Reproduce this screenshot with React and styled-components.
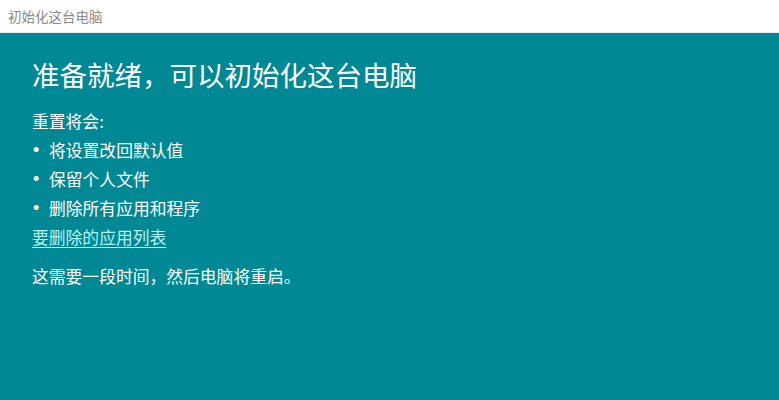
import React from "react";
import styled, { createGlobalStyle } from "styled-components";

const GlobalStyle = createGlobalStyle`
  html, body {
    margin: 0;
    padding: 0;
    height: 100%;
  }
  body {
    font-family: "Noto Sans CJK SC", "Noto Sans", sans-serif;
    background: #008894;
  }
  #root {
    height: 100%;
  }
`;

const Window = styled.div`
  display: flex;
  flex-direction: column;
  height: 100vh;
`;

const TitleBar = styled.div`
  height: 33px;
  background: #ffffff;
  display: flex;
  align-items: center;
  padding: 0 8px;
  font-size: 13.5px;
  color: #8a8a8a;
  border-bottom: 1px solid #e6eeee;
  box-sizing: border-box;
`;

const Content = styled.div`
  flex: 1;
  background: #008894;
  padding: 19px 32px;
  color: #ffffff;
`;

const Heading = styled.h1`
  margin: 0 0 11px;
  font-size: 27.5px;
  font-weight: 400;
  line-height: 44px;
`;

const Text = styled.p`
  margin: 0;
  font-size: 16.8px;
  line-height: 29px;
`;

const List = styled.ul`
  list-style: none;
  margin: 0;
  padding: 0;
`;

const Item = styled.li`
  font-size: 16.8px;
  line-height: 29px;
  display: flex;
  &::before {
    content: "•";
    font-family: "Liberation Sans", Arial, sans-serif;
    font-size: 18px;
    width: 17px;
    padding-left: 1px;
    box-sizing: border-box;
  }
`;

const Link = styled.a`
  display: inline-block;
  font-size: 16.8px;
  line-height: 29px;
  color: #b4f4f4;
  text-decoration: underline;
  text-underline-offset: 3px;
  margin-bottom: 10px;
  cursor: pointer;
`;

export default function App() {
  return (
    <>
      <GlobalStyle />
      <Window>
        <TitleBar>初始化这台电脑</TitleBar>
        <Content>
          <Heading>准备就绪，可以初始化这台电脑</Heading>
          <Text>重置将会:</Text>
          <List>
            <Item>将设置改回默认值</Item>
            <Item>保留个人文件</Item>
            <Item>删除所有应用和程序</Item>
          </List>
          <Link>要删除的应用列表</Link>
          <Text>这需要一段时间，然后电脑将重启。</Text>
        </Content>
      </Window>
    </>
  );
}
